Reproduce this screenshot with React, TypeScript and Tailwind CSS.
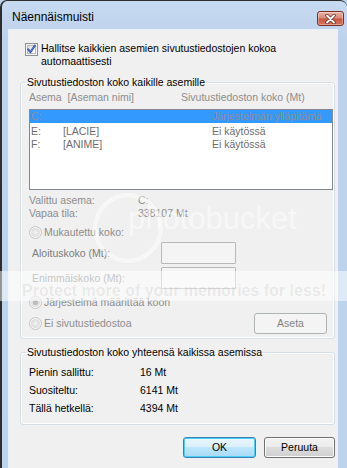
import React from "react";

function CheckBox() {
  return (
    <svg width="13" height="13" viewBox="0 0 13 13" className="shrink-0">
      <defs>
        <linearGradient id="cbg" x1="0" y1="0" x2="1" y2="1">
          <stop offset="0" stopColor="#d9dde2" />
          <stop offset="1" stopColor="#ffffff" />
        </linearGradient>
      </defs>
      <rect x="0.5" y="0.5" width="12" height="12" fill="#f5f5f5" stroke="#8e8f8f" />
      <rect x="2.5" y="2.5" width="8" height="8" fill="url(#cbg)" stroke="#b5bac0" />
      <path d="M3.2 6.4 L5.4 9.2 L9.8 2.6" fill="none" stroke="#2c4a9a" strokeWidth="2" strokeLinecap="round" strokeLinejoin="round" />
      <path d="M3.2 6.4 L5.4 9.2 L9.8 2.6" fill="none" stroke="#5b86e0" strokeWidth="0.9" strokeLinecap="round" strokeLinejoin="round" />
    </svg>
  );
}

function Radio({ checked = false }: { checked?: boolean }) {
  return (
    <svg width="13" height="13" viewBox="0 0 13 13" className="shrink-0">
      <defs>
        <radialGradient id={checked ? "rg1" : "rg0"} cx="0.5" cy="0.5" r="0.5">
          <stop offset="0" stopColor="#f2f2f2" />
          <stop offset="1" stopColor="#dcdcdc" />
        </radialGradient>
      </defs>
      <circle cx="6.5" cy="6.5" r="6" fill="#f7f7f7" stroke="#c4c4c4" />
      <circle cx="6.5" cy="6.5" r="4.5" fill={`url(#${checked ? "rg1" : "rg0"})`} />
      {checked && <circle cx="6.5" cy="6.5" r="2.6" fill="#bdbdbd" />}
    </svg>
  );
}

function CloseButton() {
  return (
    <div className="mt-[1px] ml-auto mr-[3px] flex h-[15px] w-[27px] items-center justify-center rounded-[3px] border border-[#7a2f23] bg-[linear-gradient(to_bottom,#eab3a5_0%,#dc8a78_45%,#c9563f_55%,#d9735b_100%)] shadow-[inset_0_0_0_1px_rgba(255,255,255,0.35)]">
      <svg width="13" height="10" viewBox="0 0 13 10">
        <path d="M3 1.5 L10 8.5 M10 1.5 L3 8.5" stroke="#5a2a22" strokeWidth="3.4" strokeLinecap="round" />
        <path d="M3 1.5 L10 8.5 M10 1.5 L3 8.5" stroke="#ffffff" strokeWidth="1.9" strokeLinecap="round" />
      </svg>
    </div>
  );
}

export default function App() {
  return (
    <div className="relative h-[468px] w-[347px] overflow-hidden bg-[#bcd3ec]">
      <div className="flex h-full flex-col rounded-tl-[7px] rounded-tr-[7px] border-l-2 border-t border-[#2e2e2e] bg-[linear-gradient(to_bottom,#c6daf1,#bdd3ec_40px,#bdd4ed)] font-['Liberation_Sans',Arial,sans-serif] text-[10.5px] leading-[13px] text-black">
        {/* Title bar */}
        <div className="flex h-[28px] shrink-0 items-start pl-[10px] pt-[9px]">
          <span className="text-[12px] leading-[15px] text-black">Näennäismuisti</span>
          <CloseButton />
        </div>

        {/* Client area */}
        <div className="ml-[6px] mr-[9px] flex flex-1 flex-col border-l border-t border-[#e7eff9] bg-[#f0f0f0]">
          {/* Auto checkbox */}
          <div className="ml-[16px] mt-[12px] flex items-start">
            <div className="mt-[1px]">
              <CheckBox />
            </div>
            <div className="ml-[3px] leading-[13px]">
              <div>Hallitse kaikkien asemien sivutustiedostojen kokoa</div>
              <div>automaattisesti</div>
            </div>
          </div>

          {/* Group 1 */}
          <fieldset className="ml-[11px] mt-[8px] w-[315px] rounded-[3px] border border-[#d5dfe5] pb-[4px] shadow-[inset_0_0_0_1px_#ffffff]">
            <legend className="ml-[5px] px-[1px] leading-[13px]">Sivutustiedoston koko kaikille asemille</legend>
            <div className="ml-[8px] mt-[2px] flex text-[#8d8d8d]">
              <span className="w-[152px]">Asema&nbsp; [Aseman nimi]</span>
              <span>Sivutustiedoston koko (Mt)</span>
            </div>
            <div className="ml-[8px] mt-[5px] h-[81px] w-[304px] border border-[#828790] bg-white text-[#6d6d6d]">
              <div className="flex h-[13px] items-center bg-[#3399ff] pl-[1px] text-[#8a8f96]">
                <span className="w-[181px]">C:</span>
                <span>Järjestelmän ylläpitämä</span>
              </div>
              <div className="mt-[2px] flex h-[13px] items-center pl-[1px]">
                <span className="w-[32px]">E:</span>
                <span className="w-[149px]">[LACIE]</span>
                <span>Ei käytössä</span>
              </div>
              <div className="flex h-[13px] items-center pl-[1px]">
                <span className="w-[32px]">F:</span>
                <span className="w-[149px]">[ANIME]</span>
                <span>Ei käytössä</span>
              </div>
            </div>
            <div className="ml-[8px] mt-[4px] flex text-[#8d8d8d]">
              <span className="w-[109px]">Valittu asema:</span>
              <span>C:</span>
            </div>
            <div className="ml-[8px] flex text-[#8d8d8d]">
              <span className="w-[109px]">Vapaa tila:</span>
              <span>338107 Mt</span>
            </div>
            <div className="ml-[8px] mt-[6px] flex items-center text-[#8d8d8d]">
              <Radio />
              <span className="ml-[2px]">Mukautettu koko:</span>
            </div>
            <div className="ml-[11px] mt-[3px] flex h-[22px] items-center text-[#7d7d7d]">
              <span className="w-[129px]">Aloituskoko (Mt):</span>
              <div className="h-[22px] w-[75px] rounded-[1px] border border-[#b8b8b8] bg-[#f4f4f4]" />
            </div>
            <div className="ml-[11px] mt-[3px] flex h-[22px] items-center text-[#8d8d8d]">
              <span className="w-[129px]">Enimmäiskoko (Mt):</span>
              <div className="h-[22px] w-[75px] rounded-[1px] border border-[#b8b8b8] bg-[#f4f4f4]" />
            </div>
            <div className="ml-[8px] mt-[7px] flex items-center text-[#8d8d8d]">
              <Radio checked />
              <span className="ml-[2px]">Järjestelmä määrittää koon</span>
            </div>
            <div className="ml-[8px] mr-[7px] mt-[4px] flex h-[21px] items-center text-[#8d8d8d]">
              <Radio />
              <span className="ml-[2px]">Ei sivutustiedostoa</span>
              <div className="ml-auto flex h-[21px] w-[73px] items-center justify-center rounded-[3px] border border-[#adb2b5] bg-[#f4f4f4] text-[#838383]">
                Aseta
              </div>
            </div>
          </fieldset>

          {/* Group 2 */}
          <fieldset className="ml-[11px] mt-[7px] w-[315px] rounded-[3px] border border-[#d5dfe5] pb-[7px] shadow-[inset_0_0_0_1px_#ffffff]">
            <legend className="ml-[5px] px-[1px] leading-[13px]">Sivutustiedoston koko yhteensä kaikissa asemissa</legend>
            <div className="ml-[8px] mt-[4px] flex h-[18px] items-center">
              <span className="w-[111px]">Pienin sallittu:</span>
              <span>16 Mt</span>
            </div>
            <div className="ml-[8px] flex h-[18px] items-center">
              <span className="w-[111px]">Suositeltu:</span>
              <span>6141 Mt</span>
            </div>
            <div className="ml-[8px] flex h-[18px] items-center">
              <span className="w-[111px]">Tällä hetkellä:</span>
              <span>4394 Mt</span>
            </div>
          </fieldset>

          {/* Buttons */}
          <div className="mt-[12px] flex justify-end gap-[8px] pr-[3px]">
            <div className="flex h-[21px] w-[73px] items-center justify-center rounded-[3px] border border-[#3c7fb1] bg-[linear-gradient(to_bottom,#eaf6fd_0%,#d9f0fc_50%,#bee6fd_50%,#a7d9f5_100%)] shadow-[inset_0_0_0_1px_#48d0f8]">
              OK
            </div>
            <div className="flex h-[21px] w-[71px] items-center justify-center rounded-[3px] border border-[#707070] bg-[linear-gradient(to_bottom,#f2f2f2_0%,#ebebeb_50%,#dddddd_50%,#cfcfcf_100%)] shadow-[inset_0_0_0_1px_#fcfcfc]">
              Peruuta
            </div>
          </div>
        </div>
      </div>

      {/* photobucket watermark overlay */}
      <svg className="pointer-events-none absolute left-[88px] top-[188px]" width="80" height="80" viewBox="0 0 80 80">
        <circle cx="40" cy="40" r="33" fill="none" stroke="rgba(255,255,255,0.45)" strokeWidth="5" />
        <circle cx="40" cy="40" r="35.5" fill="none" stroke="rgba(0,0,0,0.025)" strokeWidth="1" />
      </svg>
      <div className="pointer-events-none absolute left-[128px] top-[199px] font-['Liberation_Sans',Arial,sans-serif] text-[31px] leading-[40px] text-white/50">
        photobucket
      </div>
      <div className="pointer-events-none absolute left-0 top-[271px] h-[30px] w-full bg-white/50" />
      <div className="pointer-events-none absolute left-[22px] top-[283px] font-['Liberation_Sans',Arial,sans-serif] text-[16px] font-bold leading-[16px] text-black/[0.07]">
        Protect more of your memories for less!
      </div>
    </div>
  );
}
